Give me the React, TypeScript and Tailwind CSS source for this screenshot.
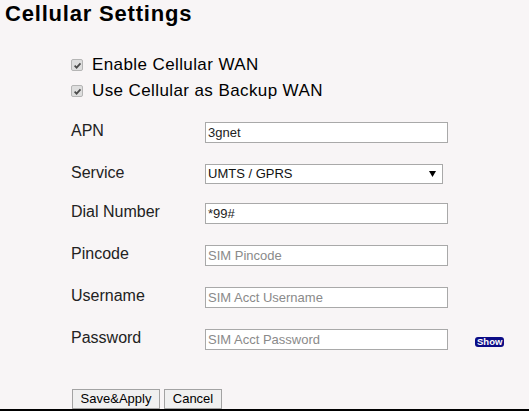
import React from "react";

const font = { fontFamily: '"Liberation Sans", Arial, sans-serif' };

function Check() {
  return (
    <span className="flex h-[12px] w-[12px] items-center justify-center rounded-[2px] border border-[#b5b5b5] bg-[#dedede]">
      <svg width="9" height="9" viewBox="0 0 10 10">
        <path d="M1.8 5.2 L4 7.4 L8.3 2.6" fill="none" stroke="#4a4a4a" strokeWidth="1.9" />
      </svg>
    </span>
  );
}

function Row({ label, mt, children }: { label: string; mt: string; children: React.ReactNode }) {
  return (
    <div className={`flex items-start ${mt}`}>
      <div className="w-[134px] text-[16px] leading-[18px] mt-[0px] text-[#222]">{label}</div>
      {children}
    </div>
  );
}

function TextInput({ value, placeholder }: { value?: string; placeholder?: string }) {
  return (
    <div className="flex h-[21px] w-[243px] items-center border border-[#a9a9a9] bg-white px-[2px] text-[13px]">
      {value ? (
        <span className="text-[#222]">{value}</span>
      ) : (
        <span className="text-[#8a8a8a]">{placeholder}</span>
      )}
    </div>
  );
}

export default function App() {
  return (
    <div style={font} className="h-[411px] w-[529px] overflow-hidden border-b-2 border-black bg-[#f8f5f6] text-black">
      <div className="pl-[5px] pt-[1px] text-[22px] font-bold leading-[25px] tracking-[0.8px]">Cellular Settings</div>

      <div className="ml-[71px] mt-[26px] flex flex-col">
        <div className="flex h-[26px] items-center gap-[9px] text-[17px] tracking-[0.4px]">
          <Check />
          <span>Enable Cellular WAN</span>
        </div>
        <div className="flex h-[26px] items-center gap-[9px] text-[17px] tracking-[0.4px]">
          <Check />
          <span>Use Cellular as Backup WAN</span>
        </div>

        <Row label="APN" mt="mt-[18px]">
          <TextInput value="3gnet" />
        </Row>
        <Row label="Service" mt="mt-[21px]">
          <div className="flex h-[20px] w-[238px] items-center justify-between border border-[#a9a9a9] bg-white pl-[2px] pr-[6px] text-[13px] text-[#111]">
            <span>UMTS / GPRS</span>
            <svg width="7" height="6" viewBox="0 0 7 6">
              <path d="M0 0 H7 L3.5 6 Z" fill="#000" />
            </svg>
          </div>
        </Row>
        <Row label="Dial Number" mt="mt-[19px]">
          <TextInput value="*99#" />
        </Row>
        <Row label="Pincode" mt="mt-[21px]">
          <TextInput placeholder="SIM Pincode" />
        </Row>
        <Row label="Username" mt="mt-[21px]">
          <TextInput placeholder="SIM Acct Username" />
        </Row>
        <Row label="Password" mt="mt-[21px]">
          <TextInput placeholder="SIM Acct Password" />
          <div className="ml-[27px] mt-[8px] flex h-[10px] items-center rounded-[3px] bg-[#0c0c86] px-[2px] text-[9.5px] font-bold leading-[10px] text-white">
            Show
          </div>
        </Row>

        <div className="mt-[39px] ml-[1px] flex gap-[4px]">
          <button className="h-[20px] w-[88px] border border-[#a3a3a3] bg-[#f0f0f0] text-[13px] leading-[18px] text-black">
            Save&amp;Apply
          </button>
          <button className="h-[20px] w-[58px] border border-[#a3a3a3] bg-[#f0f0f0] text-[13px] leading-[18px] text-black">
            Cancel
          </button>
        </div>
      </div>
    </div>
  );
}
